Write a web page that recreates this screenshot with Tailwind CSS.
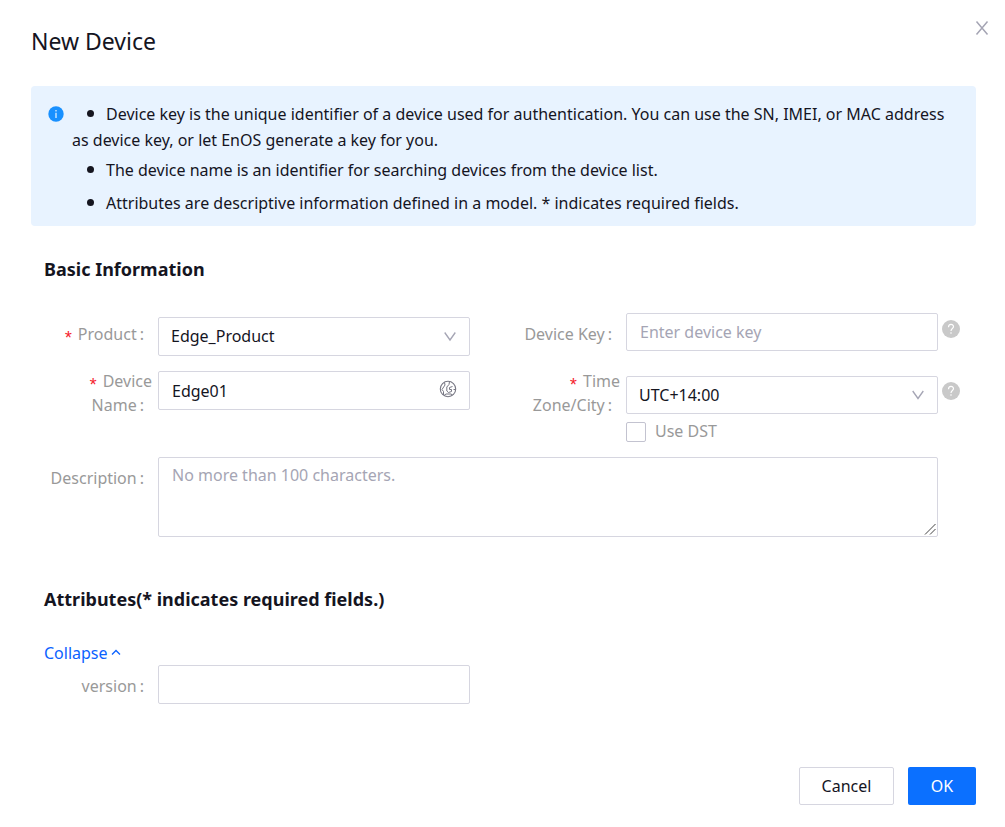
<!DOCTYPE html>
<html lang="en">
<head>
<meta charset="utf-8">
<meta name="viewport" content="width=device-width, initial-scale=1">
<title>New Device</title>
<script src="https://cdn.jsdelivr.net/npm/@tailwindcss/browser@4"></script>
</head>
<body class="bg-white font-['Noto_Sans','Open_Sans',sans-serif] text-[16px] text-[#15151f]">
<main role="dialog" aria-labelledby="title">
  <header class="flex items-start justify-between pt-5 pl-[31px] pr-[15px]">
    <h1 id="title" class="pt-[3px] text-[23px] leading-9">New Device</h1>
    <button type="button" aria-label="Close" class="flex size-4 items-center justify-center text-[#a5a5b4]">
      <svg class="size-4" viewBox="0 0 16 16" fill="none" stroke="currentColor" stroke-width="1.500"><path d="M2.500 1.500L13.500 14.500M13.500 1.500L2.500 14.500"/></svg>
    </button>
  </header>

  <section class="mt-[27px] mr-[29px] ml-[31px] flex gap-2 rounded-sm bg-[#e8f3ff] pt-[15px] pr-[18px] pb-[10px] pl-[17px]">
    <svg class="mt-[5px] size-4 shrink-0" viewBox="0 0 16 16"><circle cx="8" cy="8" r="7.700" fill="#1890ff"/><path d="M8 6.800V12M8 4V5.400" stroke="#fff" stroke-width="1.100"/></svg>
    <ul class="min-w-0 flex-1 leading-[26px]">
      <li><span class="mr-3 ml-[15px] inline-block size-[7px] rounded-full bg-[#15151f] align-[3px]"></span>Device key is the unique identifier of a device used for authentication. You can use the SN, IMEI, or MAC address as device key, or let EnOS generate a key for you.</li>
      <li class="mt-1"><span class="mr-3 ml-[15px] inline-block size-[7px] rounded-full bg-[#15151f] align-[3px]"></span>The device name is an identifier for searching devices from the device list.</li>
      <li class="mt-[7px]"><span class="mr-3 ml-[15px] inline-block size-[7px] rounded-full bg-[#15151f] align-[3px]"></span>Attributes are descriptive information defined in a model. * indicates required fields.</li>
    </ul>
  </section>

  <form class="pr-[45px] pl-11">
    <h2 class="pt-[29px] text-[18px] leading-7 font-bold">Basic Information</h2>

    <div class="mt-[30px] grid grid-cols-[110px_minmax(0,1fr)_148px_minmax(0,1fr)_18px] gap-x-1 leading-[23px]">
      <label for="product" class="pt-[10px] pr-[10px] text-right text-[#999999]"><span class="align-[-4px] font-['Liberation_Mono',monospace] text-[18px] leading-4 text-[#f5222d]">*</span> Product<span class="ml-[3px]">:</span></label>
      <div class="relative mt-1 h-[39px]">
        <select id="product" class="h-full w-full appearance-none rounded-xs border border-[#d6d6e0] bg-white pr-9 pl-3"><option>Edge_Product</option></select>
        <svg class="pointer-events-none absolute top-3 right-3 size-4" viewBox="0 0 16 16" fill="none" stroke="#a5a5b4" stroke-width="1.300"><path d="M2.700 3.500L8 11L13.300 3.500"/></svg>
      </div>
      <label for="key" class="pt-[10px] pr-[10px] text-right text-[#999999]">Device Key<span class="ml-[3px]">:</span></label>
      <input id="key" type="text" placeholder="Enter device key" class="h-[38px] w-full rounded-xs border border-[#d6d6e0] px-[13px] placeholder:text-[#a5a5b4]">
      <button type="button" aria-label="Device key help" class="mt-[7px] flex size-[18px] items-center justify-center rounded-full bg-[#c9c9c9] text-white">
        <svg class="size-3" viewBox="0 0 12 12" fill="none" stroke="currentColor" stroke-width="1.200"><path d="M3.500 4.200C3.500 0.600 8.500 0.600 8.500 3.800C8.500 5.600 6 5.600 6 8M6 9.300V10.700"/></svg>
      </button>

      <label for="name" class="mt-[14px] pr-[2px] text-right text-[#999999]"><span class="align-[-4px] font-['Liberation_Mono',monospace] text-[18px] leading-4 text-[#f5222d]">*</span> Device <span class="mr-2 block">Name<span class="ml-[3px]">:</span></span></label>
      <div class="relative mt-[15px] h-[39px]">
        <input id="name" type="text" value="Edge01" class="h-full w-full rounded-xs border border-[#d6d6e0] pr-9 pl-[13px]">
        <button type="button" aria-label="Translate name" class="absolute top-[9px] right-[13px] size-[18px] text-[#777783]">
          <svg class="size-[18px]" viewBox="0 0 18 18" fill="none" stroke="currentColor" stroke-linejoin="round"><circle cx="9" cy="9" r="7.700" stroke-width="1.100"/><path d="M5.500 2.500L6 5L3 9.500L4.500 11.500V15M10.500 1.500L10 4.500L7.800 7V11L9.500 12.500L12.500 11.500V9.500H10.500V7.500L13.500 6.500M16.500 9.500H14.500M5 15.500L7 14H12L13.500 15"/></svg>
        </button>
      </div>
      <label for="zone" class="mt-[14px] pr-[2px] text-right text-[#999999]"><span class="align-[-4px] font-['Liberation_Mono',monospace] text-[18px] leading-4 text-[#f5222d]">*</span> Time <span class="mr-2 block">Zone/City<span class="ml-[3px]">:</span></span></label>
      <div class="pt-5">
        <div class="relative h-[38px]">
          <select id="zone" class="h-full w-full appearance-none rounded-xs border border-[#d6d6e0] bg-white pr-9 pl-3"><option>UTC+14:00</option></select>
          <svg class="pointer-events-none absolute top-[11px] right-3 size-4" viewBox="0 0 16 16" fill="none" stroke="#a5a5b4" stroke-width="1.300"><path d="M2.700 4L8 11.500L13.300 4"/></svg>
        </div>
        <label class="mt-[6px] flex items-center gap-[9px] text-[#999999]"><input type="checkbox" class="size-5 appearance-none rounded-xs border border-[#c3c3d0] checked:bg-[#0b70ff]">Use DST</label>
      </div>
      <button type="button" aria-label="Time zone help" class="mt-[26px] flex size-[18px] items-center justify-center rounded-full bg-[#c9c9c9] text-white">
        <svg class="size-3" viewBox="0 0 12 12" fill="none" stroke="currentColor" stroke-width="1.200"><path d="M3.500 4.200C3.500 0.600 8.500 0.600 8.500 3.800C8.500 5.600 6 5.600 6 8M6 9.300V10.700"/></svg>
      </button>

      <label for="description" class="mt-6 pr-[10px] text-right text-[#999999]">Description<span class="ml-[3px]">:</span></label>
      <div class="relative col-span-3 mt-[14px]">
        <textarea id="description" placeholder="No more than 100 characters." class="block h-20 w-full rounded-xs border border-[#d6d6e0] px-[13px] py-[6px] placeholder:text-[#a5a5b4]"></textarea>
        <svg class="pointer-events-none absolute right-[2px] bottom-[2px] size-3" viewBox="0 0 12 12" fill="none" stroke="#444"><rect width="12" height="12" fill="#fff" stroke="none"/><path d="M1 11.500L11.500 1M6 11.500L11.500 6"/></svg>
      </div>
    </div>

    <h2 class="mt-12 text-[18px] leading-7 font-bold">Attributes(* indicates required fields.)</h2>
    <button type="button" class="mt-7 flex items-center gap-[3px] leading-6 text-[#0b62ff]">Collapse
      <svg class="size-[10px]" viewBox="0 0 10 10" fill="none" stroke="currentColor" stroke-width="1.300"><path d="M1 6.500L5 2.500L9 6.500"/></svg>
    </button>
    <div class="grid grid-cols-[110px_minmax(0,1fr)_148px_minmax(0,1fr)_18px] gap-x-1 leading-[23px]">
      <label for="version" class="pt-[10px] pr-[10px] text-right text-[#999999]">version<span class="ml-[3px]">:</span></label>
      <input id="version" type="text" class="h-[39px] w-full rounded-xs border border-[#d6d6e0] px-[13px]">
    </div>
  </form>

  <footer class="mt-[63px] flex justify-end gap-[14px] pr-[29px] pb-[22px]">
    <button type="button" class="h-[38px] w-[95px] rounded-xs border border-[#d6d6e0]">Cancel</button>
    <button type="button" class="h-[38px] w-[68px] rounded-xs bg-[#0b70ff] text-white">OK</button>
  </footer>
</main>
</body>
</html>
